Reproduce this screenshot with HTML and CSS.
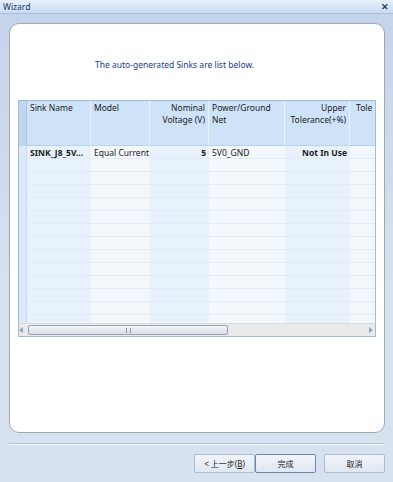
FILE: index.html
```html
<!DOCTYPE html>
<html lang="en">
<head>
  <meta charset="UTF-8">
  <title>Wizard</title>
  <link rel="stylesheet" href="styles.css">
</head>
<body>
  <div class="window">
    <div class="titlebar">
      <span class="title">Wizard</span>
      <span class="close">✕</span>
    </div>

    <div class="frame">
      <div class="panel">
        <p class="intro">The auto-generated Sinks are list below.</p>

        <div class="table">
          <div class="grid">
            <div class="hd rowhead"></div>
            <div class="hd">Sink Name</div>
            <div class="hd">Model</div>
            <div class="hd right">Nominal<br>Voltage (V)</div>
            <div class="hd">Power/Ground<br>Net</div>
            <div class="hd right">Upper<br>Tolerance(+%)</div>
            <div class="hd last">Tole</div>

            <div class="col rowhead"></div>
            <div class="col tint"><div class="cell bold">SINK_J8_5V...</div></div>
            <div class="col"><div class="cell">Equal Current</div></div>
            <div class="col tint"><div class="cell bold right">5</div></div>
            <div class="col"><div class="cell">5V0_GND</div></div>
            <div class="col tint"><div class="cell bold right">Not In Use</div></div>
            <div class="col"></div>
          </div>

          <div class="hscroll">
            <span class="arrow left"></span>
            <div class="track">
              <div class="thumb"><span class="grip"></span></div>
            </div>
            <span class="arrow right"></span>
          </div>
        </div>
      </div>

      <div class="separator"></div>

      <div class="buttons">
        <button class="btn">&lt; 上一步(<u>B</u>)</button>
        <button class="btn default">完成</button>
        <button class="btn cancel">取消</button>
      </div>
    </div>
  </div>
</body>
</html>
```

FILE: styles.css
```css
:root {
  --frame-top: #c3d3ea;
  --frame-bottom: #d7e1ef;
  --header-bg: #cfe3f8;
  --col-tint: #e8f2fc;
  --col-light: #f3f8fd;
  --row-line: #e3ecf6;
  --table-border: #9fbbdc;
  --text: #1a1a1a;
}

body {
  margin: 0;
  width: 393px;
  height: 482px;
  overflow: hidden;
  font-family: "Noto Sans", "Noto Sans CJK SC", sans-serif;
  font-size: 8.5px;
  color: var(--text);
}

.window {
  height: 482px;
  display: flex;
  flex-direction: column;
  background: linear-gradient(to bottom, var(--frame-top), var(--frame-bottom) 60%);
}

.titlebar {
  height: 14px;
  box-sizing: border-box;
  display: flex;
  justify-content: space-between;
  align-items: center;
  padding: 0 4px 0 3px;
  background: linear-gradient(to bottom, #e6f0fb, #c9dbf1);
  border-bottom: 1px solid #a9bedb;
  color: #1e395b;
}

.title {
  font-size: 8.5px;
}

.close {
  font-size: 9px;
  font-weight: bold;
  color: #2a3f5e;
}

.frame {
  flex: 1;
  padding: 9px 8px 0 9px;
}

.panel {
  height: 410px;
  box-sizing: border-box;
  background: #fff;
  border: 1px solid #a3a8ae;
  border-radius: 10px;
  padding: 0 8px;
}

.intro {
  margin: 35px 0 0 77px;
  color: #1c3a8c;
  font-size: 8.5px;
  line-height: 12px;
}

.table {
  margin-top: 29px;
  width: 358px;
  border: 1px solid var(--table-border);
  box-sizing: border-box;
}

.grid {
  display: grid;
  grid-template-columns: 8px 64px 59px 59px 76px 65px 1fr;
  grid-template-rows: 45px 177px;
}

.hd {
  background: var(--header-bg);
  border-right: 1px solid #eaf3fd;
  border-bottom: 1px solid #b8d2ef;
  padding: 1px 3px 0;
  line-height: 12px;
  white-space: nowrap;
  overflow: hidden;
}

.hd.last {
  border-right: none;
  padding-left: 6px;
}

.rowhead {
  background: #c0d7f1;
  border-right: 1px solid #aac6e6;
  padding: 0;
}

.col {
  background-color: var(--col-light);
  background-image: repeating-linear-gradient(to bottom, transparent 0 12px, var(--row-line) 12px 13px);
  overflow: hidden;
}

.col.tint {
  background-color: var(--col-tint);
}

.col.rowhead {
  background: #dde9f6;
  border-right: 1px solid #c7dbf1;
}

.cell {
  height: 12px;
  line-height: 12px;
  padding: 1px 3px 0;
  white-space: nowrap;
  overflow: hidden;
}

.right {
  text-align: right;
}

.bold {
  font-weight: bold;
}

.hscroll {
  height: 12px;
  display: flex;
  align-items: center;
  background: #eaeaea;
  border-top: 1px solid #dcdcdc;
}

.arrow {
  width: 9px;
  height: 12px;
  position: relative;
}

.arrow::after {
  content: "";
  position: absolute;
  top: 3px;
  border: 3px solid transparent;
}

.arrow.left::after {
  left: 0;
  border-right: 4px solid #8fa4c0;
  border-left: none;
}

.arrow.right::after {
  right: 2px;
  border-left: 4px solid #8fa4c0;
  border-right: none;
}

.track {
  flex: 1;
  height: 12px;
  display: flex;
  align-items: center;
}

.thumb {
  width: 200px;
  height: 10px;
  box-sizing: border-box;
  border: 1px solid #97a3b3;
  border-radius: 2px;
  background: linear-gradient(to bottom, #f4f6f9, #d8dee7);
  display: flex;
  justify-content: center;
  align-items: center;
}

.grip {
  width: 3px;
  height: 5px;
  border-left: 1px solid #8b97a8;
  border-right: 1px solid #8b97a8;
}

.separator {
  margin-top: 10px;
  height: 1px;
  background: #b7c2d0;
  border-bottom: 1px solid #f4f7fb;
}

.buttons {
  display: flex;
  justify-content: flex-end;
  margin-top: 9px;
}

.btn {
  width: 61px;
  height: 19px;
  box-sizing: border-box;
  padding: 0;
  font-family: "Noto Sans", "Noto Sans CJK SC", sans-serif;
  font-size: 8px;
  color: #1a1a1a;
  background: linear-gradient(to bottom, #f2f5fa, #dfe7f2);
  border: 1px solid #aebcd0;
  border-radius: 2px;
}

.btn.default {
  border-color: #6f86a8;
}

.btn.cancel {
  margin-left: 8px;
}
```
